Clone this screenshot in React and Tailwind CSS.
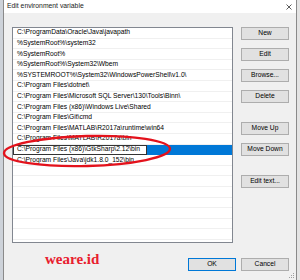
import React from 'react';

const paths = [
  'C:\\ProgramData\\Oracle\\Java\\javapath',
  '%SystemRoot%\\system32',
  '%SystemRoot%',
  '%SystemRoot%\\System32\\Wbem',
  '%SYSTEMROOT%\\System32\\WindowsPowerShell\\v1.0\\',
  'C:\\Program Files\\dotnet\\',
  'C:\\Program Files\\Microsoft SQL Server\\130\\Tools\\Binn\\',
  'C:\\Program Files (x86)\\Windows Live\\Shared',
  'C:\\Program Files\\Git\\cmd',
  'C:\\Program Files\\MATLAB\\R2017a\\runtime\\win64',
  'C:\\Program Files\\MATLAB\\R2017a\\bin',
  'C:\\Program Files (x86)\\GtkSharp\\2.12\\bin',
  'C:\\Program Files\\Java\\jdk1.8.0_152\\bin',
];

const rows = [...paths, ...Array(9).fill('')];

const Btn = ({ children, primary }) => (
  <div
    className={`flex h-[13px] w-[48px] items-center justify-center border bg-[#e1e1e1] text-[6.7px] leading-none text-black ${
      primary ? 'border-[#0078d7]' : 'border-[#adadad]'
    }`}
  >
    {children}
  </div>
);

const App = () => {
  return (
    <div
      className="flex h-[280px] w-[300px] overflow-hidden bg-[#e9e9e9]"
      style={{ fontFamily: '"Liberation Sans", Arial, sans-serif' }}
    >
      <div className="w-[3px] shrink-0 bg-[#cdd2d9]" />

      <div className="relative flex w-[294px] shrink-0 flex-col border-x border-[#8a8a8a] bg-[#f0f0f0]">
        {/* title bar */}
        <div className="flex h-[13px] items-center justify-between bg-white pl-[3px] pr-[4px]">
          <span className="text-[6.8px] leading-none text-[#222]">Edit environment variable</span>
          <svg width="6" height="6" viewBox="0 0 6 6" className="text-[#333]">
            <path d="M0.5 0.5L5.5 5.5M5.5 0.5L0.5 5.5" stroke="currentColor" strokeWidth="0.8" />
          </svg>
        </div>

        <div className="flex flex-1 flex-col">
          <div className="flex pl-[8px] pt-[14px]">
            {/* list box */}
            <div className="h-[216px] w-[221px] shrink-0 overflow-hidden border border-[#828790] bg-white">
              {rows.map((p, i) =>
                i === 11 ? (
                  <div key={i} className="flex h-[10.6px] bg-[#0078d7]">
                    <div className="flex h-full w-[134px] shrink-0 items-center overflow-hidden whitespace-nowrap border border-[#333] bg-white pl-[3px] text-[6.7px] leading-none text-black">
                      {p}
                    </div>
                  </div>
                ) : (
                  <div
                    key={i}
                    className="flex h-[10.6px] items-center border-b border-[#f0f0f0] pl-[4px] text-[6.7px] leading-none whitespace-nowrap text-black"
                  >
                    {p}
                  </div>
                )
              )}
            </div>

            {/* side buttons */}
            <div className="ml-[8px] flex flex-col">
              <div className="flex flex-col gap-[8px]">
                <Btn>New</Btn>
                <Btn>Edit</Btn>
                <Btn>Browse...</Btn>
                <Btn>Delete</Btn>
              </div>
              <div className="mt-[19px] flex flex-col gap-[8px]">
                <Btn>Move Up</Btn>
                <Btn>Move Down</Btn>
              </div>
              <div className="mt-[19px]">
                <Btn>Edit text...</Btn>
              </div>
            </div>
          </div>

          <div className="mt-[15px] flex justify-end gap-[5px] pr-[7px]">
            <Btn primary>OK</Btn>
            <Btn>Cancel</Btn>
          </div>
        </div>

        {/* red annotation ellipse */}
        <svg
          className="pointer-events-none absolute left-[-3px] top-[133px]"
          width="172"
          height="36"
          viewBox="0 0 172 36"
        >
          <ellipse cx="86" cy="18" rx="83" ry="15" fill="none" stroke="#e3121c" strokeWidth="2.4" transform="rotate(-1.5 86 18)" />
        </svg>

        {/* watermark */}
        <span
          className="absolute left-[41px] top-[252px] text-[15px] font-bold leading-none text-[#e8202e]"
          style={{ fontFamily: '"Liberation Serif", "Times New Roman", serif' }}
        >
          weare.id
        </span>

        {/* resize grip */}
        <svg className="absolute bottom-[1px] right-[1px]" width="6" height="6" viewBox="0 0 6 6">
          <rect x="4" y="0" width="1" height="1" fill="#a0a0a0" />
          <rect x="2" y="2" width="1" height="1" fill="#a0a0a0" />
          <rect x="4" y="2" width="1" height="1" fill="#a0a0a0" />
          <rect x="0" y="4" width="1" height="1" fill="#a0a0a0" />
          <rect x="2" y="4" width="1" height="1" fill="#a0a0a0" />
          <rect x="4" y="4" width="1" height="1" fill="#a0a0a0" />
        </svg>
      </div>

      <div className="w-[3px] shrink-0 bg-[#e4e4e4]" />
    </div>
  );
};

export default App;
